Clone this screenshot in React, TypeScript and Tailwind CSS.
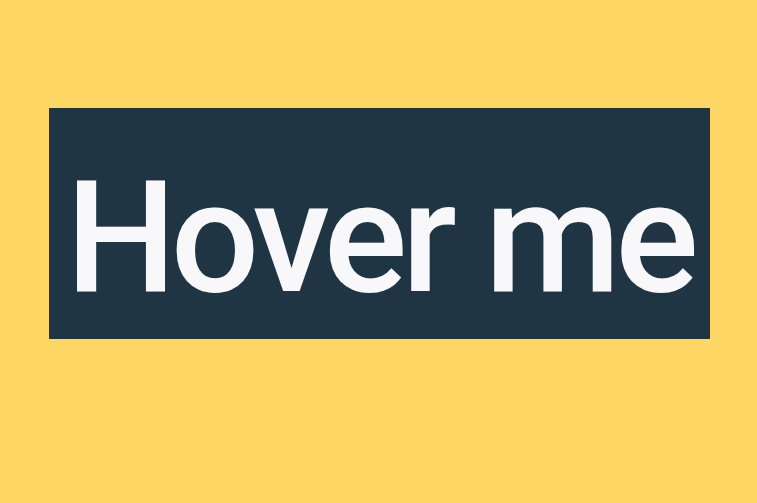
export default function App() {
  return (
    <div className="min-h-screen w-full bg-[#fdd664] pl-[49px] pt-[108px]">
      <button className="flex h-[231px] w-[661px] items-center justify-center bg-[#203543] pt-[28px] text-[#f8f8fa] hover:bg-[#2b4656]">
        <span className="whitespace-nowrap font-['Roboto',sans-serif] text-[156px] font-medium leading-none tracking-[-0.035em]">
          Hover me
        </span>
      </button>
    </div>
  );
}
